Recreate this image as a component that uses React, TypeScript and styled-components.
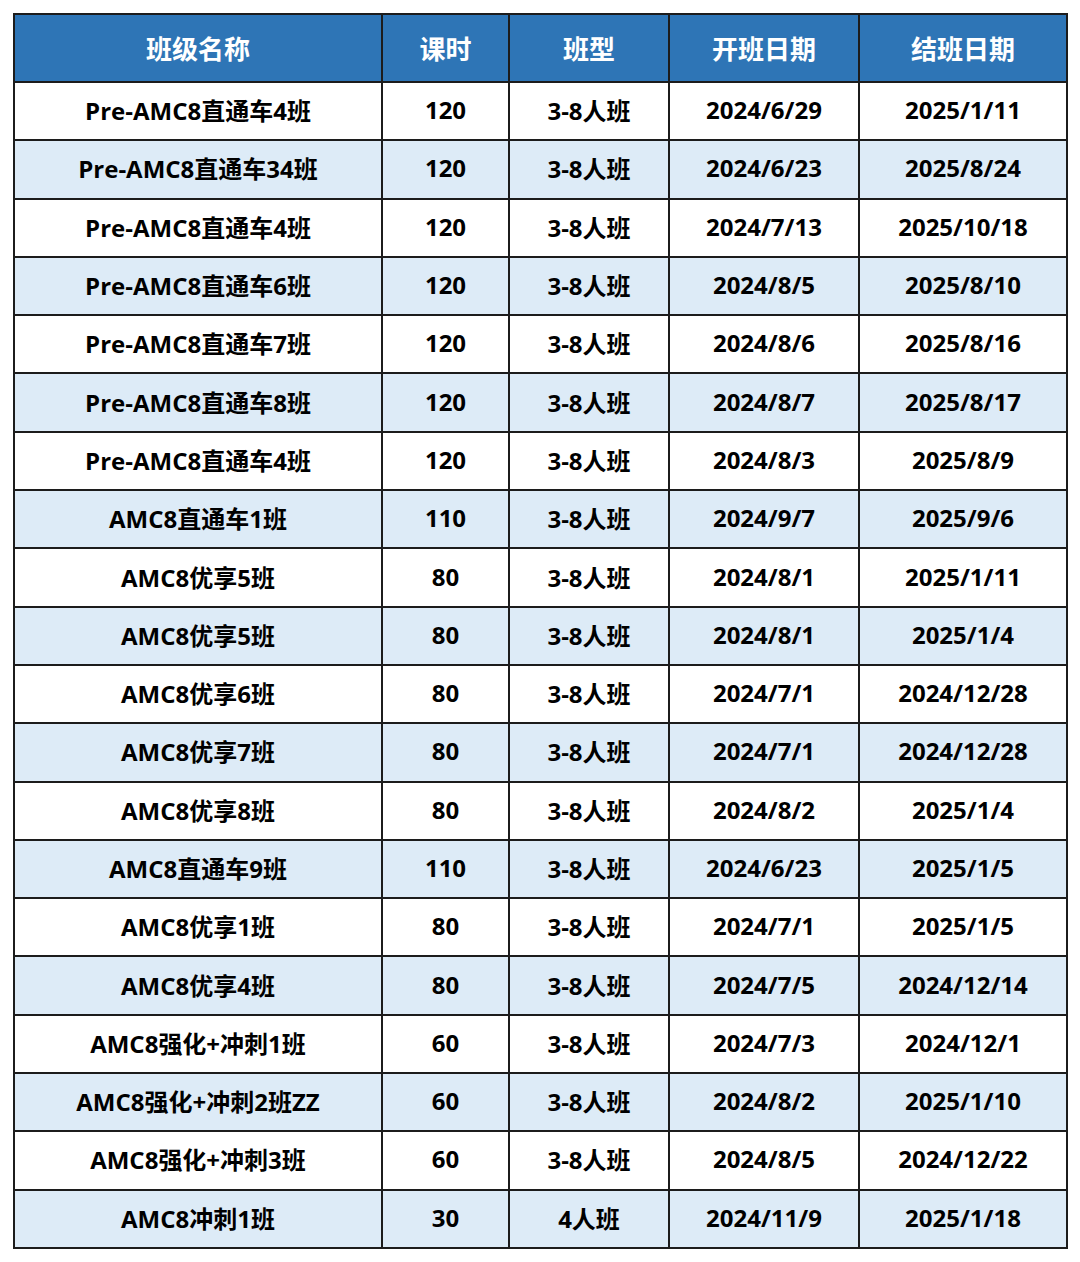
import styled, { createGlobalStyle } from "styled-components";

const GlobalStyle = createGlobalStyle`
  body {
    margin: 0;
    background: #ffffff;
    font-family: "Open Sans", "Noto Sans CJK SC", sans-serif;
  }
`;

const Page = styled.div`
  padding: 13px 0 0 13px;
`;

const Table = styled.table`
  width: 1053px;
  border-collapse: collapse;
  border: 2px solid #1c1c1c;
  table-layout: fixed;
`;

const Col = styled.col<{ $width: number }>`
  width: ${(p) => p.$width}px;
`;

const HeadCell = styled.th`
  height: 66px;
  padding: 0;
  background: #2e75b6;
  color: #ffffff;
  font-size: 26px;
  font-weight: 700;
  text-align: center;
  border: 2px solid #1c1c1c;
`;

const Row = styled.tr<{ $striped: boolean }>`
  background: ${(p) => (p.$striped ? "#ddebf7" : "#ffffff")};
`;

const Cell = styled.td`
  height: 53.3px;
  padding: 0 0 3px;
  color: #000000;
  font-size: 24px;
  font-weight: 700;
  text-align: center;
  white-space: nowrap;
  border: 2px solid #1c1c1c;
`;

const columns = [
  { title: "班级名称", width: 368 },
  { title: "课时", width: 127 },
  { title: "班型", width: 160 },
  { title: "开班日期", width: 190 },
  { title: "结班日期", width: 208 },
];

const classes = [
  ["Pre-AMC8直通车4班", "120", "3-8人班", "2024/6/29", "2025/1/11"],
  ["Pre-AMC8直通车34班", "120", "3-8人班", "2024/6/23", "2025/8/24"],
  ["Pre-AMC8直通车4班", "120", "3-8人班", "2024/7/13", "2025/10/18"],
  ["Pre-AMC8直通车6班", "120", "3-8人班", "2024/8/5", "2025/8/10"],
  ["Pre-AMC8直通车7班", "120", "3-8人班", "2024/8/6", "2025/8/16"],
  ["Pre-AMC8直通车8班", "120", "3-8人班", "2024/8/7", "2025/8/17"],
  ["Pre-AMC8直通车4班", "120", "3-8人班", "2024/8/3", "2025/8/9"],
  ["AMC8直通车1班", "110", "3-8人班", "2024/9/7", "2025/9/6"],
  ["AMC8优享5班", "80", "3-8人班", "2024/8/1", "2025/1/11"],
  ["AMC8优享5班", "80", "3-8人班", "2024/8/1", "2025/1/4"],
  ["AMC8优享6班", "80", "3-8人班", "2024/7/1", "2024/12/28"],
  ["AMC8优享7班", "80", "3-8人班", "2024/7/1", "2024/12/28"],
  ["AMC8优享8班", "80", "3-8人班", "2024/8/2", "2025/1/4"],
  ["AMC8直通车9班", "110", "3-8人班", "2024/6/23", "2025/1/5"],
  ["AMC8优享1班", "80", "3-8人班", "2024/7/1", "2025/1/5"],
  ["AMC8优享4班", "80", "3-8人班", "2024/7/5", "2024/12/14"],
  ["AMC8强化+冲刺1班", "60", "3-8人班", "2024/7/3", "2024/12/1"],
  ["AMC8强化+冲刺2班ZZ", "60", "3-8人班", "2024/8/2", "2025/1/10"],
  ["AMC8强化+冲刺3班", "60", "3-8人班", "2024/8/5", "2024/12/22"],
  ["AMC8冲刺1班", "30", "4人班", "2024/11/9", "2025/1/18"],
];

const App = () => {
  return (
    <Page>
      <GlobalStyle />
      <Table>
        <colgroup>
          {columns.map((col) => (
            <Col key={col.title} $width={col.width} />
          ))}
        </colgroup>
        <thead>
          <tr>
            {columns.map((col) => (
              <HeadCell key={col.title}>{col.title}</HeadCell>
            ))}
          </tr>
        </thead>
        <tbody>
          {classes.map((row, i) => (
            <Row key={i} $striped={i % 2 === 1}>
              {row.map((value, j) => (
                <Cell key={j}>{value}</Cell>
              ))}
            </Row>
          ))}
        </tbody>
      </Table>
    </Page>
  );
};

export default App;
